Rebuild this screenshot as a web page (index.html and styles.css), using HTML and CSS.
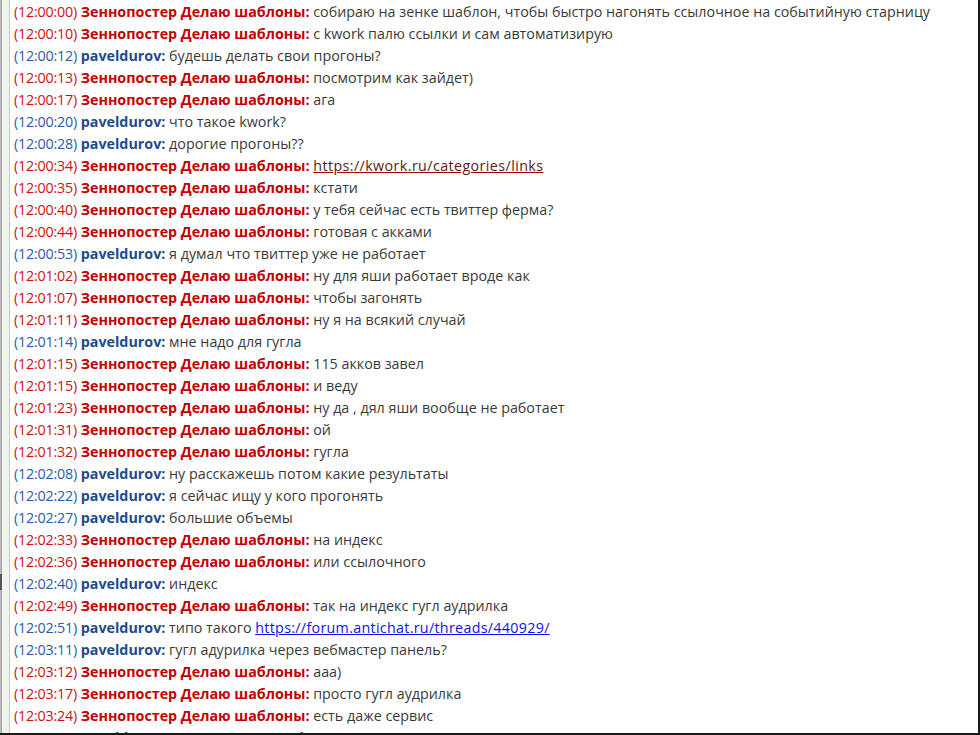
FILE: index.html
```html
<!DOCTYPE html>
<html lang="ru">
<head>
<meta charset="utf-8">
<title>Лог чата</title>
<link rel="stylesheet" href="styles.css">
</head>
<body>
<div class="frame">
  <div class="gutter"><span class="marker"></span></div>
  <div class="log">
    <div class="line r"><span class="ts">(12:00:00)</span> <b class="nick">Зеннопостер Делаю шаблоны:</b> <span class="msg">собираю на зенке шаблон, чтобы быстро нагонять ссылочное на событийную старницу</span></div>
    <div class="line r"><span class="ts">(12:00:10)</span> <b class="nick">Зеннопостер Делаю шаблоны:</b> <span class="msg">с kwork палю ссылки и сам автоматизирую</span></div>
    <div class="line b"><span class="ts">(12:00:12)</span> <b class="nick">paveldurov:</b> <span class="msg">будешь делать свои прогоны?</span></div>
    <div class="line r"><span class="ts">(12:00:13)</span> <b class="nick">Зеннопостер Делаю шаблоны:</b> <span class="msg">посмотрим как зайдет)</span></div>
    <div class="line r"><span class="ts">(12:00:17)</span> <b class="nick">Зеннопостер Делаю шаблоны:</b> <span class="msg">ага</span></div>
    <div class="line b"><span class="ts">(12:00:20)</span> <b class="nick">paveldurov:</b> <span class="msg">что такое kwork?</span></div>
    <div class="line b"><span class="ts">(12:00:28)</span> <b class="nick">paveldurov:</b> <span class="msg">дорогие прогоны??</span></div>
    <div class="line r"><span class="ts">(12:00:34)</span> <b class="nick">Зеннопостер Делаю шаблоны:</b> <a class="link-r" href="#">https://kwork.ru/categories/links</a></div>
    <div class="line r"><span class="ts">(12:00:35)</span> <b class="nick">Зеннопостер Делаю шаблоны:</b> <span class="msg">кстати</span></div>
    <div class="line r"><span class="ts">(12:00:40)</span> <b class="nick">Зеннопостер Делаю шаблоны:</b> <span class="msg">у тебя сейчас есть твиттер ферма?</span></div>
    <div class="line r"><span class="ts">(12:00:44)</span> <b class="nick">Зеннопостер Делаю шаблоны:</b> <span class="msg">готовая с акками</span></div>
    <div class="line b"><span class="ts">(12:00:53)</span> <b class="nick">paveldurov:</b> <span class="msg">я думал что твиттер уже не работает</span></div>
    <div class="line r"><span class="ts">(12:01:02)</span> <b class="nick">Зеннопостер Делаю шаблоны:</b> <span class="msg">ну для яши работает вроде как</span></div>
    <div class="line r"><span class="ts">(12:01:07)</span> <b class="nick">Зеннопостер Делаю шаблоны:</b> <span class="msg">чтобы загонять</span></div>
    <div class="line r"><span class="ts">(12:01:11)</span> <b class="nick">Зеннопостер Делаю шаблоны:</b> <span class="msg">ну я на всякий случай</span></div>
    <div class="line b"><span class="ts">(12:01:14)</span> <b class="nick">paveldurov:</b> <span class="msg">мне надо для гугла</span></div>
    <div class="line r"><span class="ts">(12:01:15)</span> <b class="nick">Зеннопостер Делаю шаблоны:</b> <span class="msg">115 акков завел</span></div>
    <div class="line r"><span class="ts">(12:01:15)</span> <b class="nick">Зеннопостер Делаю шаблоны:</b> <span class="msg">и веду</span></div>
    <div class="line r"><span class="ts">(12:01:23)</span> <b class="nick">Зеннопостер Делаю шаблоны:</b> <span class="msg">ну да , дял яши вообще не работает</span></div>
    <div class="line r"><span class="ts">(12:01:31)</span> <b class="nick">Зеннопостер Делаю шаблоны:</b> <span class="msg">ой</span></div>
    <div class="line r"><span class="ts">(12:01:32)</span> <b class="nick">Зеннопостер Делаю шаблоны:</b> <span class="msg">гугла</span></div>
    <div class="line b"><span class="ts">(12:02:08)</span> <b class="nick">paveldurov:</b> <span class="msg">ну расскажешь потом какие результаты</span></div>
    <div class="line b"><span class="ts">(12:02:22)</span> <b class="nick">paveldurov:</b> <span class="msg">я сейчас ищу у кого прогонять</span></div>
    <div class="line b"><span class="ts">(12:02:27)</span> <b class="nick">paveldurov:</b> <span class="msg">большие объемы</span></div>
    <div class="line r"><span class="ts">(12:02:33)</span> <b class="nick">Зеннопостер Делаю шаблоны:</b> <span class="msg">на индекс</span></div>
    <div class="line r"><span class="ts">(12:02:36)</span> <b class="nick">Зеннопостер Делаю шаблоны:</b> <span class="msg">или ссылочного</span></div>
    <div class="line b"><span class="ts">(12:02:40)</span> <b class="nick">paveldurov:</b> <span class="msg">индекс</span></div>
    <div class="line r"><span class="ts">(12:02:49)</span> <b class="nick">Зеннопостер Делаю шаблоны:</b> <span class="msg">так на индекс гугл аудрилка</span></div>
    <div class="line b"><span class="ts">(12:02:51)</span> <b class="nick">paveldurov:</b> <span class="msg">типо такого</span> <a class="link-b" href="#">https://forum.antichat.ru/threads/440929/</a></div>
    <div class="line b"><span class="ts">(12:03:11)</span> <b class="nick">paveldurov:</b> <span class="msg">гугл адурилка через вебмастер панель?</span></div>
    <div class="line r"><span class="ts">(12:03:12)</span> <b class="nick">Зеннопостер Делаю шаблоны:</b> <span class="msg">ааа)</span></div>
    <div class="line r"><span class="ts">(12:03:17)</span> <b class="nick">Зеннопостер Делаю шаблоны:</b> <span class="msg">просто гугл аудрилка</span></div>
    <div class="line r"><span class="ts">(12:03:24)</span> <b class="nick">Зеннопостер Делаю шаблоны:</b> <span class="msg">есть даже сервис</span></div>
    <div class="line b"><span class="ts">(12:03:35)</span> <b class="nick">paveldurov:</b> <span class="msg">Можно и через вебмастер панель сделать</span></div>
  </div>
</div>
</body>
</html>
```

FILE: styles.css
```css
html, body {
  margin: 0;
  padding: 0;
  background: #ffffff;
}

.frame {
  display: flex;
  width: 980px;
  height: 735px;
  box-sizing: border-box;
  border-bottom: 2px solid #1a1a1a;
  overflow: hidden;
}

.gutter {
  position: relative;
  width: 10px;
  flex: none;
  box-sizing: border-box;
  background: #f2f2f2;
  border-left: 1px solid #b8b8b8;
  border-right: 1px solid #c8c8c8;
  box-shadow: inset 1px 0 0 #7cc47c;
}

.marker {
  position: absolute;
  left: -1px;
  top: 574px;
  width: 2px;
  height: 16px;
  background: #555;
}

.log {
  flex: 1;
  min-width: 0;
  padding: 1px 0 0 4px;
  border-right: 2px solid #1a1a1a;
  overflow: hidden;
  font-family: "Open Sans", "Noto Sans", sans-serif;
  font-size: 14.3px;
  color: #3a3a3a;
}

.line {
  height: 22px;
  line-height: 22px;
  white-space: nowrap;
}

.ts {
  letter-spacing: -0.2px;
}

.nick {
  font-weight: 700;
}

.r .ts { color: #cc1111; }
.r .nick { color: #c40000; }
.b .ts { color: #2a5ca8; }
.b .nick { color: #1e4c8a; }

.msg { color: #3a3a3a; }

.link-r {
  color: #5a1a1a;
  letter-spacing: 0.4px;
  text-decoration: underline;
  text-decoration-color: #a00000;
}

.link-b {
  color: #1010ee;
  letter-spacing: 0.3px;
  text-decoration: underline;
}
```
